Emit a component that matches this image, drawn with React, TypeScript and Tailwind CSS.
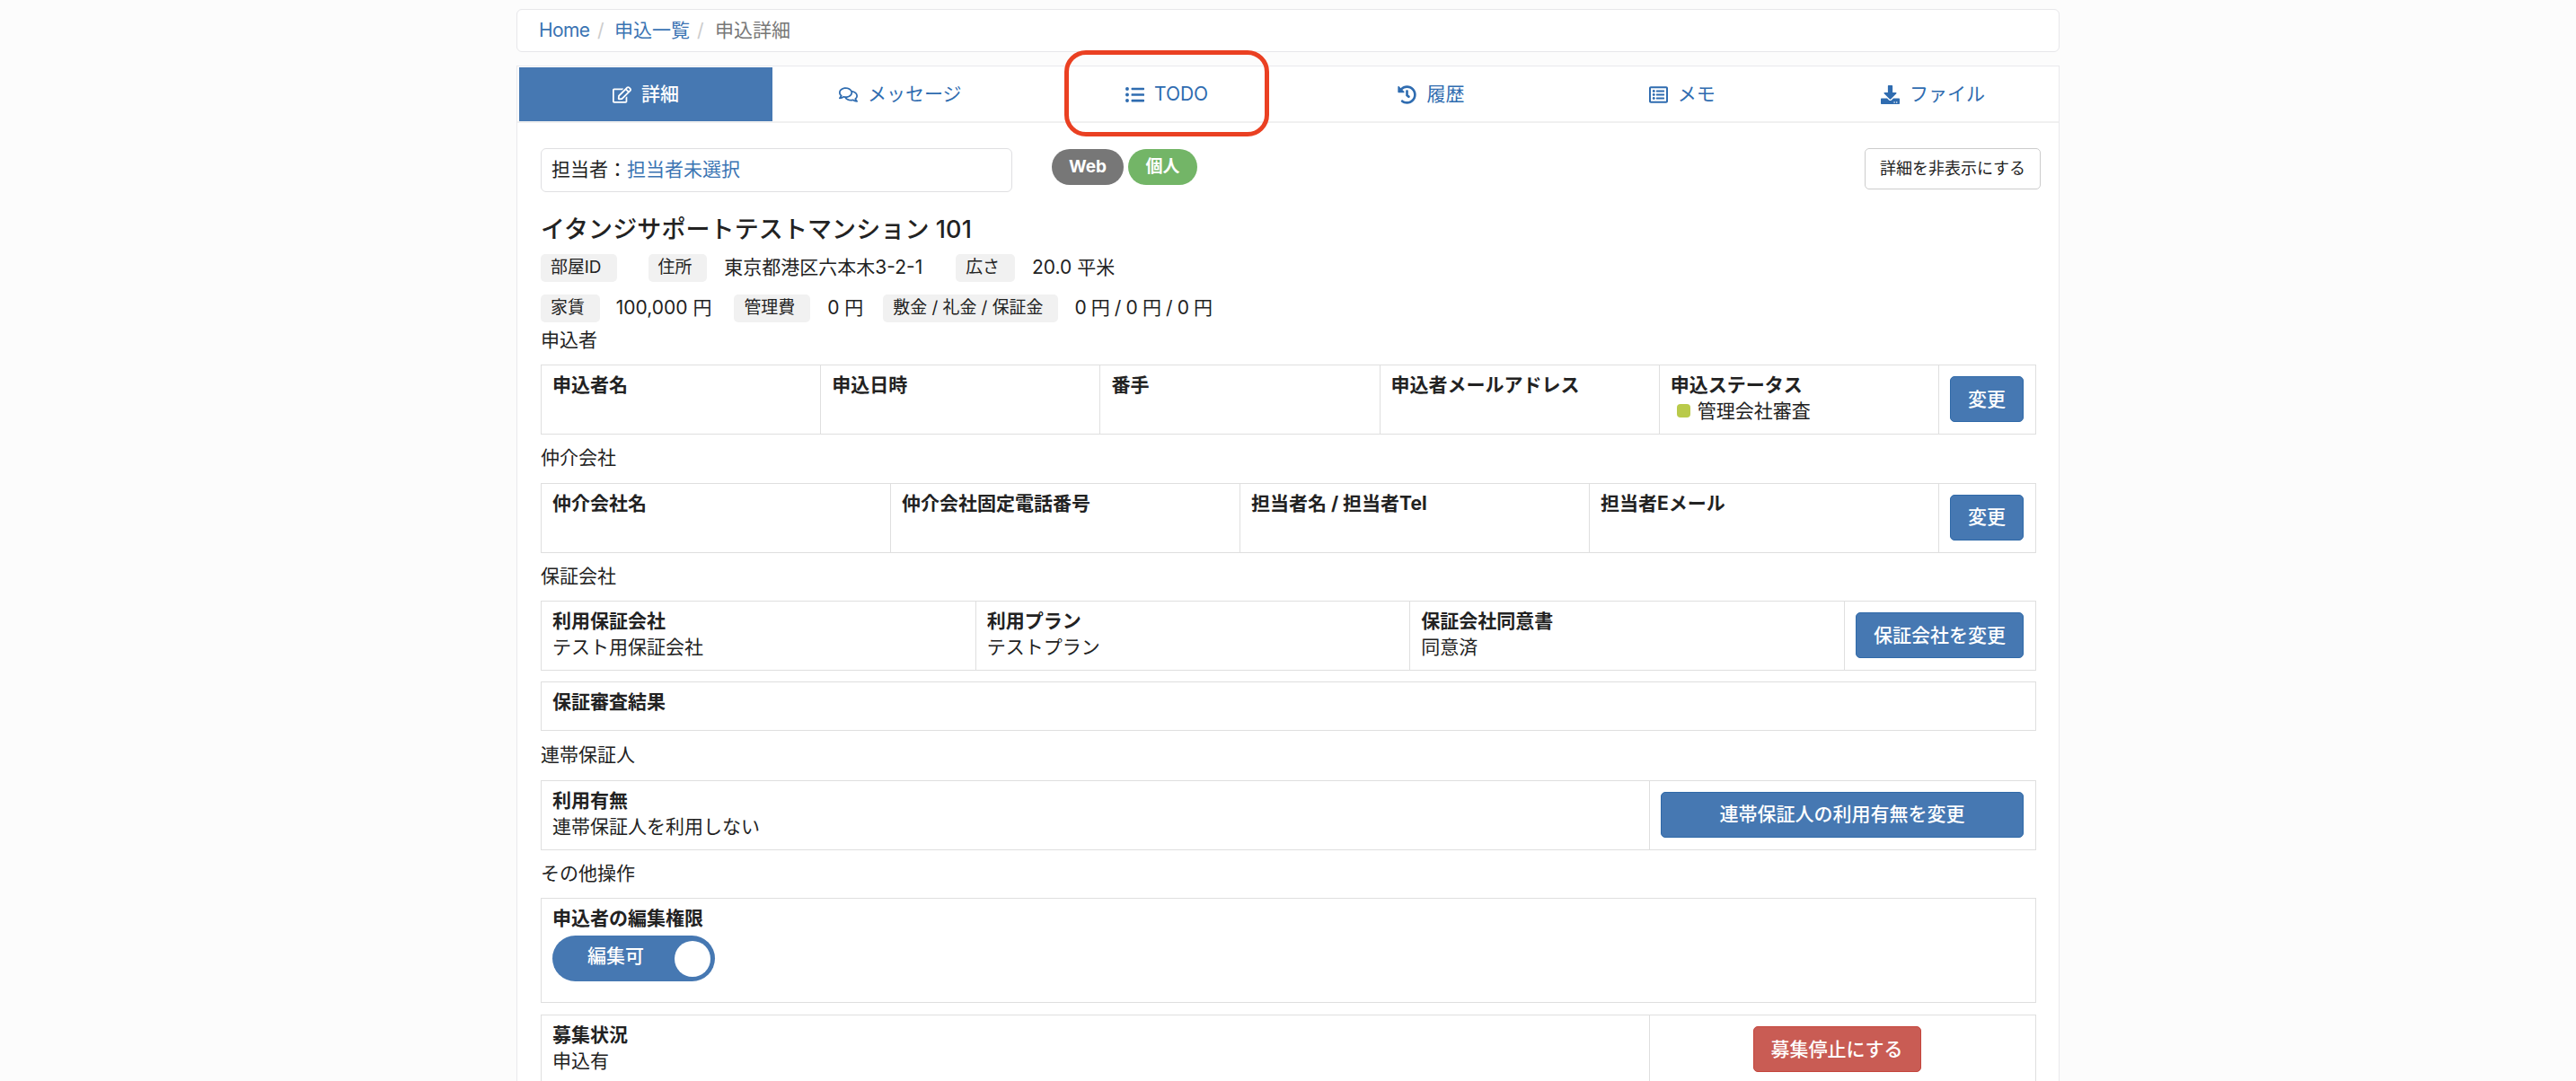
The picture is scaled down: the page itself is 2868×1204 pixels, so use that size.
import { useState } from 'react';
import type { ReactNode } from 'react';
import {
  FaDownload,
  FaHistory,
  FaListUl,
  FaRegComments,
  FaRegEdit,
  FaRegListAlt,
} from 'react-icons/fa';

const tabs = [
  { id: 'detail', label: '詳細', icon: FaRegEdit, width: 'w-[282px]' },
  { id: 'message', label: 'メッセージ', icon: FaRegComments, width: 'w-[285px]' },
  { id: 'todo', label: 'TODO', icon: FaListUl, width: 'w-[309px]' },
  { id: 'history', label: '履歴', icon: FaHistory, width: 'w-[280px]' },
  { id: 'memo', label: 'メモ', icon: FaRegListAlt, width: 'w-[279px]' },
  { id: 'file', label: 'ファイル', icon: FaDownload, width: 'w-[280px]' },
];

function Tag({ children }: { children: ReactNode }) {
  return (
    <span className="h-[31px] pl-[11px] pr-[17px] flex items-center rounded-[5px] bg-[#f1f1f1] text-[18.9px]">
      {children}
    </span>
  );
}

function SectionTitle({ children }: { children: ReactNode }) {
  return <h2 className="h-[53.5px] pt-[11px] leading-[30px]">{children}</h2>;
}

function Box({ children, className = 'h-[78px]' }: { children: ReactNode; className?: string }) {
  return (
    <div className={`flex border border-[#dfdfdf] divide-x divide-[#dfdfdf] ${className}`}>
      {children}
    </div>
  );
}

function Cell({ label, children }: { label: string; children?: ReactNode }) {
  return (
    <div className="flex-1 px-3 pt-[7px] leading-[29px]">
      <div className="font-bold">{label}</div>
      {children}
    </div>
  );
}

function Button({ children, className = '' }: { children: ReactNode; className?: string }) {
  return (
    <button
      className={`h-[51px] rounded-[5px] border border-[#2f69a8] bg-[#4678b2] text-white font-medium ${className}`}
    >
      {children}
    </button>
  );
}

export default function App() {
  const [activeTab, setActiveTab] = useState('detail');
  const [editable, setEditable] = useState(true);

  return (
    <div className="h-[1204px] overflow-hidden bg-[#fcfcfc] pt-[10px] text-[21px] text-[#222] font-[Inter,'Noto_Sans_CJK_JP',sans-serif]">
      <div className="w-[1718px] ml-[575px]">
        <nav className="h-12 pl-6 flex items-center rounded-[6px] border border-[#e7e7ea] bg-white">
          <a href="#" className="w-14 tracking-[-0.03em] text-[#3b74b3]">Home</a>
          <span className="w-7 pl-[9px] text-[#ccc]">/</span>
          <a href="#" className="text-[#3b74b3]">申込一覧</a>
          <span className="w-7 pl-[8px] text-[#ccc]">/</span>
          <span className="text-[#777]">申込詳細</span>
        </nav>

        <main className="mt-[15px] border border-[#e9e9ec] bg-white">
          <div className="relative flex h-[63px] pl-[2px] pt-px border-b-2 border-[#f0f0f0]">
            {tabs.map(({ id, label, icon: Icon, width }) => (
              <button
                key={id}
                onClick={() => setActiveTab(id)}
                className={`${width} h-[60px] flex items-center justify-center gap-[11px] ${
                  activeTab === id ? 'bg-[#4678b2] text-white font-medium' : 'text-[#2f6cb0]'
                }`}
              >
                <Icon className="h-[21px] w-auto" />
                {label}
              </button>
            ))}
            <div className="absolute left-[609px] top-[-18px] w-[228px] h-[96px] rounded-[24px] border-[5px] border-[#ea4022] pointer-events-none" />
          </div>

          <div className="pl-[26px] pr-[20px] pt-[28px]">
            <div className="flex items-start">
              <div className="w-[525px] h-[49px] pl-[11px] pb-px flex items-center rounded-[6px] border border-[#dfdfe2]">
                担当者：
                <a href="#" className="text-[#3b74b3]">担当者未選択</a>
              </div>
              <span className="ml-[44px] mt-px w-20 h-10 flex items-center justify-center rounded-full bg-[#777] text-white text-[19px] font-bold">
                Web
              </span>
              <span className="ml-[5px] mt-px w-[77px] h-10 flex items-center justify-center rounded-full bg-[#73b567] text-white text-[19px] font-bold">
                個人
              </span>
              <button className="ml-auto w-[196px] h-[46px] pb-px rounded-[5px] border border-[#ccc] text-[18px]">
                詳細を非表示にする
              </button>
            </div>

            <div className="pr-[5px]">
              <h1 className="mt-[22px] h-10 leading-10 text-[27px] font-medium tracking-[0.1px]">
                イタンジサポートテストマンション 101
              </h1>
              <div className="mt-[7px] flex h-[31px] items-center">
                <Tag>部屋ID</Tag>
                <span className="w-[35px]" />
                <Tag>住所</Tag>
                <span className="ml-[19px] mr-[37px] pb-[2px]">東京都港区六本木3-2-1</span>
                <Tag>広さ</Tag>
                <span className="ml-[19px] pb-[2px]">20.0 平米</span>
              </div>
              <div className="mt-[14px] flex h-[31px] items-center">
                <Tag>家賃</Tag>
                <span className="ml-[18px] mr-[25px] pb-[2px]">100,000 円</span>
                <Tag>管理費</Tag>
                <span className="ml-[19px] mr-[22px] pb-[2px]">0 円</span>
                <Tag>敷金 / 礼金 / 保証金</Tag>
                <span className="ml-[18px] pb-[2px] [word-spacing:-0.8px]">0 円 / 0 円 / 0 円</span>
              </div>

              <h2 className="h-[47px] pt-[5px] leading-[30px]">申込者</h2>
              <Box>
                <Cell label="申込者名" />
                <Cell label="申込日時" />
                <Cell label="番手" />
                <Cell label="申込者メールアドレス" />
                <Cell label="申込ステータス">
                  <div className="flex items-center gap-2 pl-[7px]">
                    <span className="size-[15px] rounded-[4px] bg-[#b9ca4a]" />
                    管理会社審査
                  </div>
                </Cell>
                <div className="w-[107px] pl-3 pt-3">
                  <Button className="w-[82px]">変更</Button>
                </div>
              </Box>

              <SectionTitle>仲介会社</SectionTitle>
              <Box>
                <Cell label="仲介会社名" />
                <Cell label="仲介会社固定電話番号" />
                <Cell label="担当者名 / 担当者Tel" />
                <Cell label="担当者Eメール" />
                <div className="w-[107px] pl-3 pt-3">
                  <Button className="w-[82px]">変更</Button>
                </div>
              </Box>

              <SectionTitle>保証会社</SectionTitle>
              <Box>
                <Cell label="利用保証会社">テスト用保証会社</Cell>
                <Cell label="利用プラン">テストプラン</Cell>
                <Cell label="保証会社同意書">同意済</Cell>
                <div className="w-[212px] pl-3 pt-3">
                  <Button className="w-[187px]">保証会社を変更</Button>
                </div>
              </Box>
              <Box className="mt-3 mb-px h-[55px]">
                <Cell label="保証審査結果" />
              </Box>

              <SectionTitle>連帯保証人</SectionTitle>
              <Box>
                <Cell label="利用有無">連帯保証人を利用しない</Cell>
                <div className="w-[429px] pl-3 pt-3">
                  <Button className="w-[404px]">連帯保証人の利用有無を変更</Button>
                </div>
              </Box>

              <SectionTitle>その他操作</SectionTitle>
              <Box className="h-[117px]">
                <Cell label="申込者の編集権限">
                  <button
                    onClick={() => setEditable(!editable)}
                    className="mt-[5px] w-[181px] h-[51px] pl-[39px] pr-[5px] flex items-center justify-between rounded-full bg-[#4678b2] text-white font-medium"
                  >
                    <span className="pb-[6px]">{editable ? '編集可' : '編集不可'}</span>
                    <span className="size-10 rounded-full bg-white" />
                  </button>
                </Cell>
              </Box>
              <Box className="mt-[13px] h-[78px]">
                <Cell label="募集状況">申込有</Cell>
                <div className="w-[429px] pt-3 pr-[13px] flex justify-center">
                  <button className="w-[187px] h-[51px] rounded-[5px] border border-[#c5453c] bg-[#c95c54] text-white font-medium">
                    募集停止にする
                  </button>
                </div>
              </Box>
            </div>
          </div>
        </main>
      </div>
    </div>
  );
}
